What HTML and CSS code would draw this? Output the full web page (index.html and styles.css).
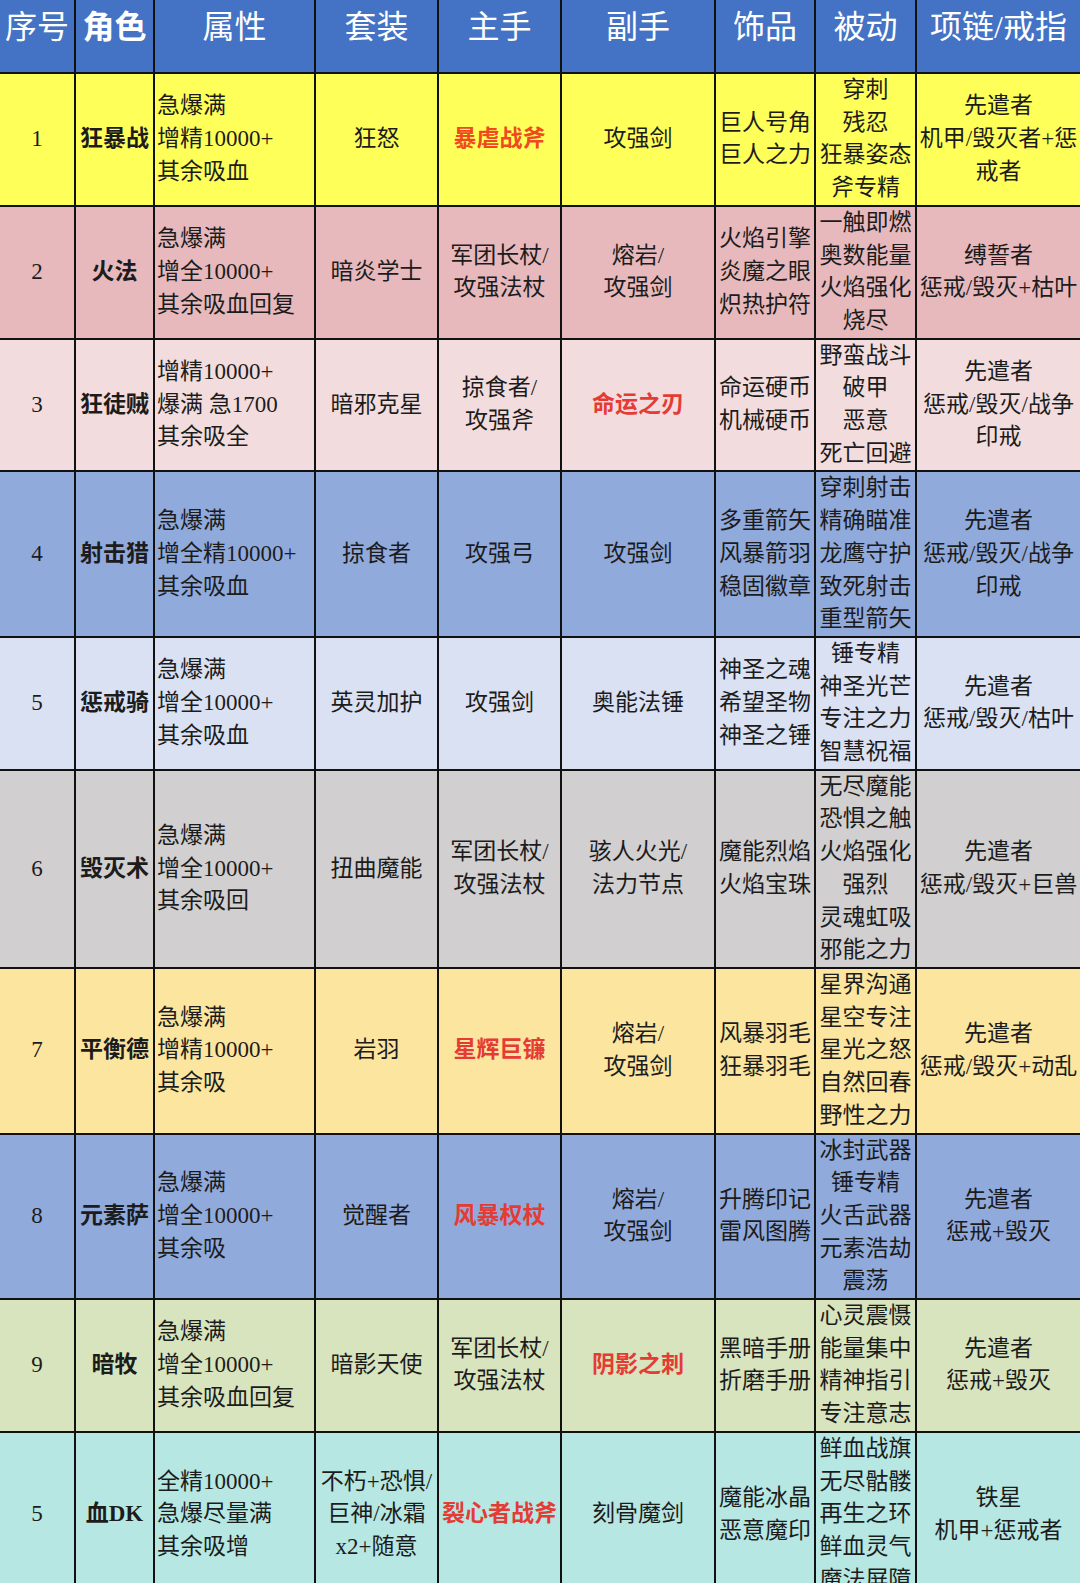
FILE: index.html
```html
<!DOCTYPE html>
<html lang="zh-CN">
<head>
<meta charset="utf-8">
<title>配装表</title>
<link rel="stylesheet" href="styles.css">
</head>
<body>
<table class="build-table">
  <colgroup>
    <col class="c-no"><col class="c-role"><col class="c-attr"><col class="c-set"><col class="c-main"><col class="c-off"><col class="c-trinket"><col class="c-passive"><col class="c-ring">
  </colgroup>
  <thead>
    <tr>
      <th>序号</th><th class="strong">角色</th><th>属性</th><th>套装</th><th>主手</th><th>副手</th><th>饰品</th><th>被动</th><th>项链/戒指</th>
    </tr>
  </thead>
  <tbody>
    <tr class="bg-yellow">
      <td class="no">1</td><td class="name">狂暴战</td>
      <td class="attr">急爆满<br>增精10000+<br>其余吸血</td>
      <td>狂怒</td><td class="hl hl-orange">暴虐战斧</td><td>攻强剑</td>
      <td>巨人号角<br>巨人之力</td>
      <td>穿刺<br>残忍<br>狂暴姿态<br>斧专精</td>
      <td>先遣者<br>机甲/毁灭者+惩<br>戒者</td>
    </tr>
    <tr class="bg-pink">
      <td class="no">2</td><td class="name">火法</td>
      <td class="attr">急爆满<br>增全10000+<br>其余吸血回复</td>
      <td>暗炎学士</td><td>军团长杖/<br>攻强法杖</td><td>熔岩/<br>攻强剑</td>
      <td>火焰引擎<br>炎魔之眼<br>炽热护符</td>
      <td>一触即燃<br>奥数能量<br>火焰强化<br>烧尽</td>
      <td>缚誓者<br>惩戒/毁灭+枯叶</td>
    </tr>
    <tr class="bg-rose">
      <td class="no">3</td><td class="name">狂徒贼</td>
      <td class="attr">增精10000+<br>爆满 急1700<br>其余吸全</td>
      <td>暗邪克星</td><td>掠食者/<br>攻强斧</td><td class="hl">命运之刃</td>
      <td>命运硬币<br>机械硬币</td>
      <td>野蛮战斗<br>破甲<br>恶意<br>死亡回避</td>
      <td>先遣者<br>惩戒/毁灭/战争<br>印戒</td>
    </tr>
    <tr class="bg-blue">
      <td class="no">4</td><td class="name">射击猎</td>
      <td class="attr">急爆满<br>增全精10000+<br>其余吸血</td>
      <td>掠食者</td><td>攻强弓</td><td>攻强剑</td>
      <td>多重箭矢<br>风暴箭羽<br>稳固徽章</td>
      <td>穿刺射击<br>精确瞄准<br>龙鹰守护<br>致死射击<br>重型箭矢</td>
      <td>先遣者<br>惩戒/毁灭/战争<br>印戒</td>
    </tr>
    <tr class="bg-ice">
      <td class="no">5</td><td class="name">惩戒骑</td>
      <td class="attr">急爆满<br>增全10000+<br>其余吸血</td>
      <td>英灵加护</td><td>攻强剑</td><td>奥能法锤</td>
      <td>神圣之魂<br>希望圣物<br>神圣之锤</td>
      <td>锤专精<br>神圣光芒<br>专注之力<br>智慧祝福</td>
      <td>先遣者<br>惩戒/毁灭/枯叶</td>
    </tr>
    <tr class="bg-gray">
      <td class="no">6</td><td class="name">毁灭术</td>
      <td class="attr">急爆满<br>增全10000+<br>其余吸回</td>
      <td>扭曲魔能</td><td>军团长杖/<br>攻强法杖</td><td>骇人火光/<br>法力节点</td>
      <td>魔能烈焰<br>火焰宝珠</td>
      <td>无尽魔能<br>恐惧之触<br>火焰强化<br>强烈<br>灵魂虹吸<br>邪能之力</td>
      <td>先遣者<br>惩戒/毁灭+巨兽</td>
    </tr>
    <tr class="bg-sand">
      <td class="no">7</td><td class="name">平衡德</td>
      <td class="attr">急爆满<br>增精10000+<br>其余吸</td>
      <td>岩羽</td><td class="hl">星辉巨镰</td><td>熔岩/<br>攻强剑</td>
      <td>风暴羽毛<br>狂暴羽毛</td>
      <td>星界沟通<br>星空专注<br>星光之怒<br>自然回春<br>野性之力</td>
      <td>先遣者<br>惩戒/毁灭+动乱</td>
    </tr>
    <tr class="bg-blue">
      <td class="no">8</td><td class="name">元素萨</td>
      <td class="attr">急爆满<br>增全10000+<br>其余吸</td>
      <td>觉醒者</td><td class="hl">风暴权杖</td><td>熔岩/<br>攻强剑</td>
      <td>升腾印记<br>雷风图腾</td>
      <td>冰封武器<br>锤专精<br>火舌武器<br>元素浩劫<br>震荡</td>
      <td>先遣者<br>惩戒+毁灭</td>
    </tr>
    <tr class="bg-green">
      <td class="no">9</td><td class="name">暗牧</td>
      <td class="attr">急爆满<br>增全10000+<br>其余吸血回复</td>
      <td>暗影天使</td><td>军团长杖/<br>攻强法杖</td><td class="hl">阴影之刺</td>
      <td>黑暗手册<br>折磨手册</td>
      <td>心灵震慑<br>能量集中<br>精神指引<br>专注意志</td>
      <td>先遣者<br>惩戒+毁灭</td>
    </tr>
    <tr class="bg-cyan">
      <td class="no">5</td><td class="name">血DK</td>
      <td class="attr">全精10000+<br>急爆尽量满<br>其余吸增</td>
      <td>不朽+恐惧/<br>巨神/冰霜<br>x2+随意</td><td class="hl">裂心者战斧</td><td>刻骨魔剑</td>
      <td>魔能冰晶<br>恶意魔印</td>
      <td>鲜血战旗<br>无尽骷髅<br>再生之环<br>鲜血灵气<br>魔法屏障</td>
      <td>铁星<br>机甲+惩戒者</td>
    </tr>
  </tbody>
</table>
</body>
</html>
```

FILE: styles.css
```css
html, body {
  margin: 0;
  padding: 0;
  background: #ffffff;
}

body {
  font-family: "Liberation Serif", "Noto Sans CJK SC", serif;
  color: #1c1c1c;
}

.build-table {
  width: 1080px;
  table-layout: fixed;
  border-collapse: collapse;
  border-style: hidden;
}

.c-no { width: 75px; }
.c-role { width: 79px; }
.c-attr { width: 161px; }
.c-set { width: 123px; }
.c-main { width: 123px; }
.c-off { width: 154px; }
.c-trinket { width: 100px; }
.c-passive { width: 101px; }
.c-ring { width: 164px; }

.build-table th,
.build-table td {
  border: 2px solid #111111;
  padding: 0;
  text-align: center;
}

.build-table th {
  height: 67px;
  background: #4472c4;
  color: #ffffff;
  font-size: 32px;
  font-weight: normal;
  line-height: 44px;
  vertical-align: top;
  padding-top: 5px;
  white-space: nowrap;
  overflow: hidden;
}

.build-table th.strong {
  font-weight: bold;
}

.build-table td {
  font-size: 23px;
  line-height: 32.7px;
  vertical-align: middle;
}

.build-table td.no {
  font-size: 23px;
}

.build-table td.name {
  font-weight: bold;
}

.build-table td.attr {
  text-align: left;
  padding-left: 2px;
}

.build-table td.hl {
  color: #e43b35;
  font-weight: bold;
}

.build-table td.hl-orange {
  color: #ee4a1e;
}

.bg-yellow td { background: #ffff5a; }
.bg-pink td { background: #e7b9bc; }
.bg-rose td { background: #f3dcdd; }
.bg-blue td { background: #91aadc; }
.bg-ice td { background: #dae1f2; }
.bg-gray td { background: #d1cfd0; }
.bg-sand td { background: #fbe59f; }
.bg-green td { background: #d8e4bd; }
.bg-cyan td { background: #b6e7e2; }
```
